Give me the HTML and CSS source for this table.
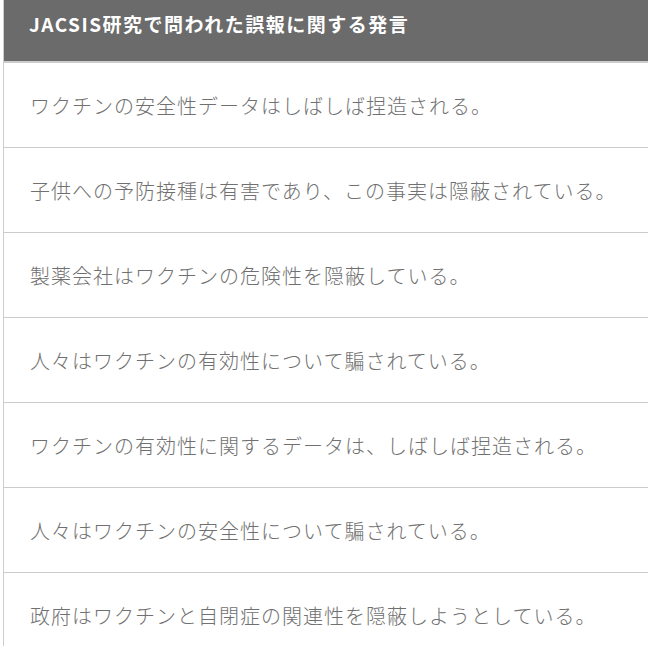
FILE: index.html
```html
<!DOCTYPE html>
<html lang="ja">
<head>
<meta charset="utf-8">
<link rel="stylesheet" href="styles.css">
</head>
<body>
<div class="panel">
  <div class="panel-head">JACSIS研究で問われた誤報に関する発言</div>
  <ul class="claims">
    <li class="claim">ワクチンの安全性データはしばしば捏造される。</li>
    <li class="claim">子供への予防接種は有害であり、この事実は隠蔽されている。</li>
    <li class="claim">製薬会社はワクチンの危険性を隠蔽している。</li>
    <li class="claim">人々はワクチンの有効性について騙されている。</li>
    <li class="claim">ワクチンの有効性に関するデータは、しばしば捏造される。</li>
    <li class="claim">人々はワクチンの安全性について騙されている。</li>
    <li class="claim">政府はワクチンと自閉症の関連性を隠蔽しようとしている。</li>
  </ul>
</div>
</body>
</html>
```
FILE: styles.css
```css
html, body {
  margin: 0;
  padding: 0;
  background: #ffffff;
}
body {
  font-family: "Noto Sans CJK JP", "Noto Sans", sans-serif;
}
.panel {
  margin-left: 3px;
  border-left: 1px solid #cccccc;
}
.panel-head {
  background: #6b6b6b;
  color: #ffffff;
  font-size: 19px;
  font-weight: 700;
  letter-spacing: 1.5px;
  line-height: 27px;
  padding: 10px 0 24px 25px;
  border-bottom: 2px solid #cccccc;
}
.claims {
  list-style: none;
  margin: 0;
  padding: 0;
}
.claim {
  height: 84px;
  display: flex;
  align-items: center;
  padding-left: 26px;
  border-bottom: 1px solid #cccccc;
  color: #707070;
  font-size: 20px;
  font-weight: 300;
  letter-spacing: 1px;
  white-space: nowrap;
}
```
